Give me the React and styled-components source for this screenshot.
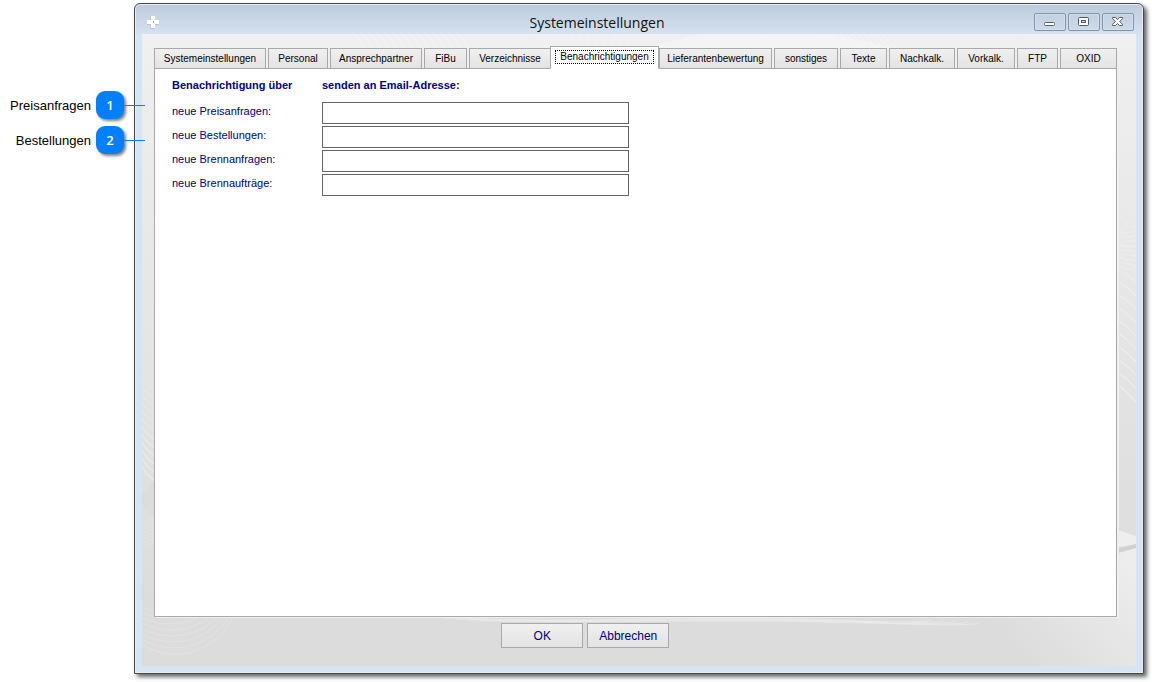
import React, { useState } from "react";
import styled, { createGlobalStyle } from "styled-components";

const GlobalStyle = createGlobalStyle`
  *, *::before, *::after { box-sizing: border-box; }
  body {
    margin: 0;
    background: #fff;
    font-family: "Liberation Sans", Arial, sans-serif;
  }
  button, input { font-family: inherit; }
`;

const Page = styled.div`
  display: flex;
  min-height: 100vh;
  padding: 3px 8px 8px 0;
`;

const Callouts = styled.aside`
  position: relative;
  z-index: 2;
  flex: 0 0 134px;
  min-width: 0;
  display: flex;
  flex-direction: column;
  gap: 7px;
  padding-top: 88px;
`;

const Callout = styled.div`
  display: flex;
  align-items: center;
  justify-content: flex-end;
  width: 145px;
  height: 28px;
  color: #000;
`;

const CalloutText = styled.span`
  padding-top: 2px;
  font-size: 13px;
  line-height: 16px;
`;

const CalloutBadge = styled.span`
  width: 28px;
  height: 28px;
  margin-left: 5px;
  border-radius: 9px;
  background: #0080ff;
  box-shadow: 2px 2px 3px rgba(0, 0, 0, 0.5);
  color: #fff;
  font-family: "Open Sans", "Noto Sans", sans-serif;
  font-size: 13px;
  font-weight: 600;
  line-height: 28px;
  text-align: center;
`;

const CalloutLine = styled.span`
  width: 21px;
  height: 1px;
  background: #0080ff;
`;

const Window = styled.main`
  flex: 1;
  min-width: 0;
  display: flex;
  flex-direction: column;
  border: 1px solid #46484c;
  border-radius: 6px 6px 0 0;
  background: linear-gradient(#bdcad9, #d5e3f1 30px, #d7e4f2 34px);
  box-shadow: inset 0 0 0 1px #e6edf5, 3px 3px 4px rgba(0, 0, 0, 0.6);
`;

const TitleBar = styled.header`
  display: flex;
  align-items: center;
  height: 30px;
  padding: 6px 9px 0 11px;
`;

const Title = styled.h1`
  flex: 1;
  margin: 0;
  padding-top: 2px;
  color: #111;
  font-family: "Open Sans", "Noto Sans", sans-serif;
  font-size: 14px;
  font-weight: 400;
  line-height: 20px;
  text-align: center;
`;

const WindowControls = styled.div`
  display: flex;
  gap: 2px;
`;

const ControlButton = styled.button`
  display: grid;
  place-items: center;
  width: 32px;
  height: 18px;
  padding: 0;
  border: 1px solid #8493ad;
  border-radius: 2px;
  background: linear-gradient(#c3d0df, #cddae8);
  box-shadow: inset 0 0 0 1px #d5dfeb;
`;

const Body = styled.div`
  position: relative;
  flex: 1;
  display: flex;
  flex-direction: column;
  margin: 0 7px 7px;
  padding: 12px 19px 0 12px;
  background: linear-gradient(#f0f0f0, #ebebeb 20%, #e2e2e2 60%, #dcdcdc 90%);
`;

const Backdrop = styled.svg`
  position: absolute;
  inset: 0;
  width: 100%;
  height: 100%;
`;

const TabList = styled.div`
  position: relative;
  z-index: 1;
  display: flex;
  align-items: flex-end;
  gap: 2px;
  height: 23px;
  margin-bottom: -1px;
`;

const Tab = styled.button`
  flex: ${(p) => `${p.$share} ${p.$share} ${p.$share}px`};
  min-width: 0;
  height: ${(p) => (p.$active ? 23 : 21)}px;
  margin: ${(p) => (p.$active ? "0 -2px 0 -3px" : "0")};
  padding: ${(p) => (p.$active ? "3px 4px 4px" : "0")};
  z-index: ${(p) => (p.$active ? 1 : 0)};
  border: 1px solid #a9a9a9;
  border-bottom-color: ${(p) => (p.$active ? "#fff" : "#a9a9a9")};
  background: ${(p) => (p.$active ? "#fff" : "linear-gradient(#f0f0f0, #e3e3e3)")};
  color: #000;
  font-size: 10px;
  line-height: 14px;
  text-align: center;
  white-space: nowrap;
`;

const TabLabel = styled.span`
  display: block;
  border: 1px dotted ${(p) => (p.$active ? "#000" : "transparent")};
  line-height: ${(p) => (p.$active ? 12 : 14)}px;
`;

const Panel = styled.section`
  position: relative;
  flex: 1;
  padding: 9px 17px;
  border: 1px solid #a9a9a9;
  background: #fff;
  box-shadow: 2px 1px 0 #efefef;
`;

const Form = styled.form`
  display: grid;
  grid-template-columns: 150px minmax(0, 307px);
  row-gap: 2px;
  color: #000080;
  font-size: 11px;
  line-height: 14px;
`;

const ColumnTitle = styled.h2`
  margin: 0 0 8px;
  font-size: 11px;
  font-weight: 700;
  line-height: 14px;
`;

const FieldLabel = styled.label`
  padding-top: 2px;
`;

const TextField = styled.input`
  width: 100%;
  height: 22px;
  padding: 2px 4px;
  border: 1px solid #646464;
  border-radius: 0;
  background: #fff;
  color: #000080;
  font-size: 11px;
`;

const Footer = styled.footer`
  position: relative;
  display: grid;
  grid-template-columns: 349fr 82px 82px 446fr;
  column-gap: 4px;
  height: 49px;
  margin-left: -4px;
  padding-top: 6px;
`;

const ActionButton = styled.button`
  grid-column: ${(p) => p.$column};
  height: 25px;
  padding: 0;
  border: 1px solid #a9a9a9;
  background: linear-gradient(#f0f0f0, #e3e3e3);
  color: #000080;
  font-size: 12px;
  line-height: 16px;
`;

const tabs = [
  ["Systemeinstellungen", 112],
  ["Personal", 60],
  ["Ansprechpartner", 92],
  ["FiBu", 43],
  ["Verzeichnisse", 82],
  ["Benachrichtigungen", 109],
  ["Lieferantenbewertung", 113],
  ["sonstiges", 64],
  ["Texte", 47],
  ["Nachkalk.", 66],
  ["Vorkalk.", 58],
  ["FTP", 41],
  ["OXID", 57],
];

const fields = [
  ["preisanfragen", "neue Preisanfragen:"],
  ["bestellungen", "neue Bestellungen:"],
  ["brennanfragen", "neue Brennanfragen:"],
  ["brennauftraege", "neue Brennaufträge:"],
];

const range = (n) => Array.from({ length: n }, (_, i) => i);

function AppIcon() {
  return (
    <svg width="14" height="16" viewBox="0 0 14 16" aria-hidden="true">
      <path d="M4 2h4v4h5v5H9v4H4v-4H1V6h3z" fill="#a9b8c4" opacity="0.6" />
      <path d="M5 2h4v4h4v4H9v4H5v-4H1V6h4z" fill="#fff" />
      <rect x="7" y="7" width="1" height="2" fill="#e8894a" />
    </svg>
  );
}

function MinimizeIcon() {
  return (
    <svg width="12" height="10" viewBox="0 0 12 10" aria-hidden="true">
      <rect x="0.5" y="5.5" width="10" height="3" rx="1" fill="#fff" stroke="#525a68" />
    </svg>
  );
}

function MaximizeIcon() {
  return (
    <svg width="12" height="10" viewBox="0 0 12 10" aria-hidden="true">
      <rect x="0.5" y="0.5" width="10" height="8" rx="1" fill="#fff" stroke="#525a68" />
      <rect x="3.5" y="3.5" width="4" height="2" fill="#cbd7e5" stroke="#525a68" />
    </svg>
  );
}

function CloseIcon() {
  return (
    <svg width="12" height="10" viewBox="0 0 12 10" aria-hidden="true">
      <path
        d="M.5.5h3l2 2 2-2h3v1.200L7.700 4.500l2.800 2.800v1.200h-3l-2-2-2 2h-3V7.300l2.800-2.800L.5 1.700z"
        fill="#fff"
        stroke="#525a68"
        strokeLinejoin="round"
      />
    </svg>
  );
}

function BodyBackdrop() {
  return (
    <Backdrop viewBox="0 0 994 632" preserveAspectRatio="none" fill="none" aria-hidden="true">
      <defs>
        <linearGradient id="corner" gradientUnits="userSpaceOnUse" x1="890" y1="632" x2="1000" y2="540">
          <stop offset="0" stopColor="#ededed" stopOpacity="0" />
          <stop offset="1" stopColor="#ededed" />
        </linearGradient>
      </defs>
      <path d="M500 14L560 0h130l60 14z" fill="#f4f4f4" />
      <g stroke="#f8f8f8">
        {range(14).map((i) => (
          <path key={i} d={`M${212 + i * 8} 0q8 6 10 14`} opacity="0.6" />
        ))}
        {range(14).map((i) => (
          <path key={i} d={`M${405 + i * 7} 14q${i - 6} -8 ${(i - 6) * 2} -14`} opacity="0.5" />
        ))}
        {range(11).map((i) => (
          <path key={i} d={`M${680 + i * 6} 0q6 8 14 14`} opacity="0.7" />
        ))}
      </g>
      <g stroke="#f3f3f3">
        {range(16).map((i) => (
          <path key={i} d={`M976 ${156 + i * 13}q9 6 18 ${12 + i / 3}`} opacity={0.3 + i * 0.045} />
        ))}
        {range(9).map((i) => (
          <path key={i} d={`M976 ${200 + i * 4}l18 ${i - 3}`} opacity="0.5" />
        ))}
        {range(12).map((i) => (
          <path key={i} d={`M0 ${345 + i * 8}q5 8 12 ${10 + i / 3}`} opacity={0.3 + i * 0.05} />
        ))}
      </g>
      <path d="M0 460l12-14v36L0 470z" fill="#d6d6d6" opacity="0.4" />
      <g stroke="#ececec">
        {range(8).map((i) => (
          <ellipse key={i} cx={33 - i} cy={550 - i} rx={66 - i * 2} ry={70 - i * 5} opacity="0.4" />
        ))}
        {range(5).map((i) => (
          <path
            key={i}
            d={`M${290 + i * 12} ${583 + i}q100 ${5 - i} 200 ${2 - i / 2}t200 ${1 + i / 3}t100 -1`}
            opacity="0.6"
          />
        ))}
      </g>
      <path d="M850 584h126v-70l18-5v123H850z" fill="url(#corner)" />
      <path d="M976 496l18 6v8l-18 3z" fill="#eee" />
      <path d="M976 514l18-4v4l-18 5z" fill="#d0d0d0" />
    </Backdrop>
  );
}

export default function App() {
  const [activeTab, setActiveTab] = useState("Benachrichtigungen");
  return (
    <>
      <GlobalStyle />
      <Page>
        <Callouts>
          {["Preisanfragen", "Bestellungen"].map((text, i) => (
            <Callout key={text}>
              <CalloutText>{text}</CalloutText>
              <CalloutBadge>{i + 1}</CalloutBadge>
              <CalloutLine />
            </Callout>
          ))}
        </Callouts>
        <Window>
          <TitleBar>
            <AppIcon />
            <Title>Systemeinstellungen</Title>
            <WindowControls>
              <ControlButton type="button" aria-label="Minimieren">
                <MinimizeIcon />
              </ControlButton>
              <ControlButton type="button" aria-label="Maximieren">
                <MaximizeIcon />
              </ControlButton>
              <ControlButton type="button" aria-label="Schließen">
                <CloseIcon />
              </ControlButton>
            </WindowControls>
          </TitleBar>
          <Body>
            <BodyBackdrop />
            <TabList role="tablist">
              {tabs.map(([name, share]) => (
                <Tab
                  key={name}
                  type="button"
                  role="tab"
                  aria-selected={name === activeTab}
                  $share={share}
                  $active={name === activeTab}
                  onClick={() => setActiveTab(name)}
                >
                  <TabLabel $active={name === activeTab}>{name}</TabLabel>
                </Tab>
              ))}
            </TabList>
            <Panel role="tabpanel">
              <Form id="settings" onSubmit={(e) => e.preventDefault()}>
                <ColumnTitle>Benachrichtigung über</ColumnTitle>
                <ColumnTitle>senden an Email-Adresse:</ColumnTitle>
                {fields.map(([id, label]) => (
                  <React.Fragment key={id}>
                    <FieldLabel htmlFor={id}>{label}</FieldLabel>
                    <TextField id={id} type="email" />
                  </React.Fragment>
                ))}
              </Form>
            </Panel>
            <Footer>
              <ActionButton type="submit" form="settings" $column={2}>
                OK
              </ActionButton>
              <ActionButton type="button" $column={3}>
                Abbrechen
              </ActionButton>
            </Footer>
          </Body>
        </Window>
      </Page>
    </>
  );
}
